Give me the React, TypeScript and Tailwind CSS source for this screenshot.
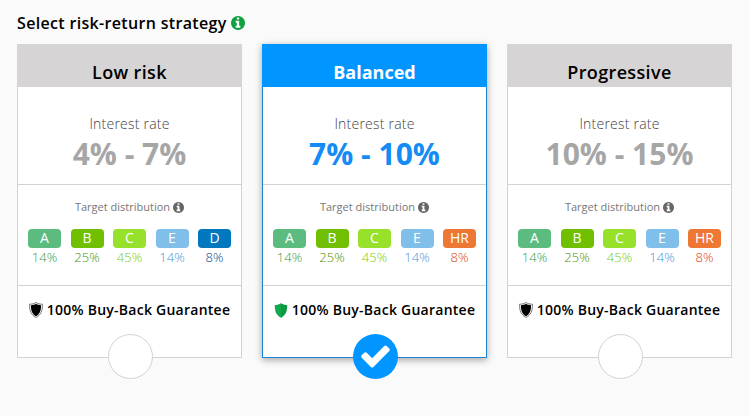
import React from 'react';

interface Grade {
    label: string;
    share: string;
    badge: string;
    text: string;
}

interface Strategy {
    name: string;
    rate: string;
    grades: Grade[];
    selected: boolean;
}

const baseGrades: Grade[] = [
    { label: 'A', share: '14%', badge: 'bg-[#5cbc80]', text: 'text-[#30994f]' },
    { label: 'B', share: '25%', badge: 'bg-[#70bf00]', text: 'text-[#4c9200]' },
    { label: 'C', share: '45%', badge: 'bg-[#97e12b]', text: 'text-[#78cc08]' },
    { label: 'E', share: '14%', badge: 'bg-[#80bfea]', text: 'text-[#4d92d8]' },
];

const gradeD: Grade = { label: 'D', share: '8%', badge: 'bg-[#0077be]', text: 'text-[#004a94]' };
const gradeHR: Grade = { label: 'HR', share: '8%', badge: 'bg-[#ee7733]', text: 'text-[#dc3c0c]' };

const strategies: Strategy[] = [
    { name: 'Low risk', rate: '4% - 7%', grades: [...baseGrades, gradeD], selected: false },
    { name: 'Balanced', rate: '7% - 10%', grades: [...baseGrades, gradeHR], selected: true },
    { name: 'Progressive', rate: '10% - 15%', grades: [...baseGrades, gradeHR], selected: false },
];

const InfoIcon: React.FC<{ size: number; className?: string }> = ({ size, className }) => (
    <svg width={size} height={size} viewBox="128 128 1536 1536" fill="currentColor" className={className}>
        <path d="M1152 1376v-160q0-14-9-23t-23-9h-96v-512q0-14-9-23t-23-9h-320q-14 0-23 9t-9 23v160q0 14 9 23t23 9h96v320h-96q-14 0-23 9t-9 23v160q0 14 9 23t23 9h448q14 0 23-9t9-23zm-128-896v-160q0-14-9-23t-23-9h-192q-14 0-23 9t-9 23v160q0 14 9 23t23 9h192q14 0 23-9t9-23zm640 416q0 209-103 385.500t-279.500 279.500-385.500 103-385.500-103-279.500-279.500-103-385.500 103-385.500 279.500-279.500 385.500-103 385.500 103 279.500 279.500 103 385.500z" />
    </svg>
);

const OutlinedShield: React.FC = () => (
    <svg width="14" height="16" viewBox="0 0 14 16" className="shrink-0">
        <path
            d="M7 .5C5.200 1.700 3 2.200.6 2.200.3 8.500 2 13 7 15.500 12 13 13.700 8.500 13.400 2.200 11 2.200 8.800 1.700 7 .5Z"
            fill="#fff"
            stroke="#444"
            strokeWidth="0.7"
        />
        <path
            d="M7 1.800C5.500 2.800 4 3.200 1.900 3.300 1.800 8.500 3.300 12.200 7 14.300 10.700 12.200 12.200 8.500 12.100 3.300 10 3.200 8.500 2.800 7 1.800Z"
            fill="#000"
        />
    </svg>
);

const GreenShield: React.FC = () => (
    <svg width="14" height="15" viewBox="-0.5 0 14 15" className="shrink-0">
        <path d="M6.500.3C4.700 1.500 2.800 2 .3 2.100.2 8.500 1.800 12.500 6.500 14.700L7 14V.6Z" fill="#12a84e" />
        <path d="M6.500.3C8.300 1.500 10.200 2 12.700 2.100 12.800 8.500 11.200 12.500 6.500 14.700Z" fill="#0b9a43" />
    </svg>
);

const CheckMark: React.FC = () => (
    <svg width="33" height="33" viewBox="0 0 1792 1792" fill="#fff" className="shrink-0">
        <path d="M1671 534q0 40-28 68l-724 724-136 136q-28 28-68 28t-68-28l-136-136-362-362q-28-28-28-68t28-68l136-136q28-28 68-28t68 28l294 295 656-657q28-28 68-28t68 28l136 136q28 28 28 68z" />
    </svg>
);

const StrategyCard: React.FC<{ strategy: Strategy }> = ({ strategy }) => {
    const { name, rate, grades, selected } = strategy;

    return (
        <div
            className={`relative h-[314px] w-[225px] border bg-white text-center ${
                selected
                    ? 'border-[#1b87d6] shadow-[0_2px_7px_rgba(0,0,0,0.35)]'
                    : 'border-[#d3d3d3]'
            }`}
        >
            <div
                className={`-mx-px -mt-px h-[43px] pt-[14px] text-[18px] leading-[28px] ${
                    selected
                        ? 'bg-[#0095ff] font-bold text-white'
                        : 'bg-[#d6d4d5] font-semibold tracking-[0.35px] text-black'
                }`}
            >
                {name}
            </div>

            <div className="h-[98px] border-b border-[#d3d3d3] pt-[27px]">
                <div className="text-[14px] leading-5 font-light tracking-[0.22px] text-[#444]">Interest rate</div>
                <div
                    className={`text-[30px] leading-[40px] font-bold ${
                        selected ? 'text-[#148bf5]' : 'text-[#a6a6a6]'
                    }`}
                >
                    {rate}
                </div>
            </div>

            <div className="h-[101px] border-b border-[#d3d3d3] pt-[13px]">
                <div className="flex items-center justify-center gap-[3px] text-[11px] leading-[18px] text-[#777]">
                    Target distribution
                    <InfoIcon size={11} className="text-[#666]" />
                </div>
                <div className="mt-[13px] flex justify-between px-[10px]">
                    {grades.map((grade) => (
                        <div key={grade.label} className="w-[33px]">
                            <div className={`h-[19px] rounded-[4px] text-[14px] leading-[18px] text-white ${grade.badge}`}>
                                {grade.label}
                            </div>
                            <div className={`text-[13px] leading-[19px] font-light ${grade.text}`}>{grade.share}</div>
                        </div>
                    ))}
                </div>
            </div>

            <div className="flex items-center justify-center gap-1 pt-[14px] text-[14px] leading-5 font-semibold tracking-[0.25px] text-black">
                {selected ? <GreenShield /> : <OutlinedShield />}
                100% Buy-Back Guarantee
            </div>

            {/* selection circle sits on the bottom edge */}
            <div
                className={`absolute -bottom-[22px] left-[89.5px] flex h-[45px] w-[45px] items-center justify-center rounded-full ${
                    selected ? 'bg-[#0095ff]' : 'border border-[#d3d3d3] bg-white'
                }`}
            >
                {selected && <CheckMark />}
            </div>
        </div>
    );
};

export default function App() {
    return (
        <div className="h-[416px] w-[749px] overflow-hidden bg-[#fafafa] pt-[11px] pl-[17px] font-['Open_Sans',sans-serif]">
            <div className="flex h-[33px] items-start gap-1 text-[16px] leading-6 font-semibold tracking-[0.33px] text-black">
                Select risk-return strategy
                <InfoIcon size={14} className="mt-[5px] text-[#0fa03f]" />
            </div>
            <div className="flex gap-5">
                {strategies.map((strategy) => (
                    <StrategyCard key={strategy.name} strategy={strategy} />
                ))}
            </div>
        </div>
    );
}
